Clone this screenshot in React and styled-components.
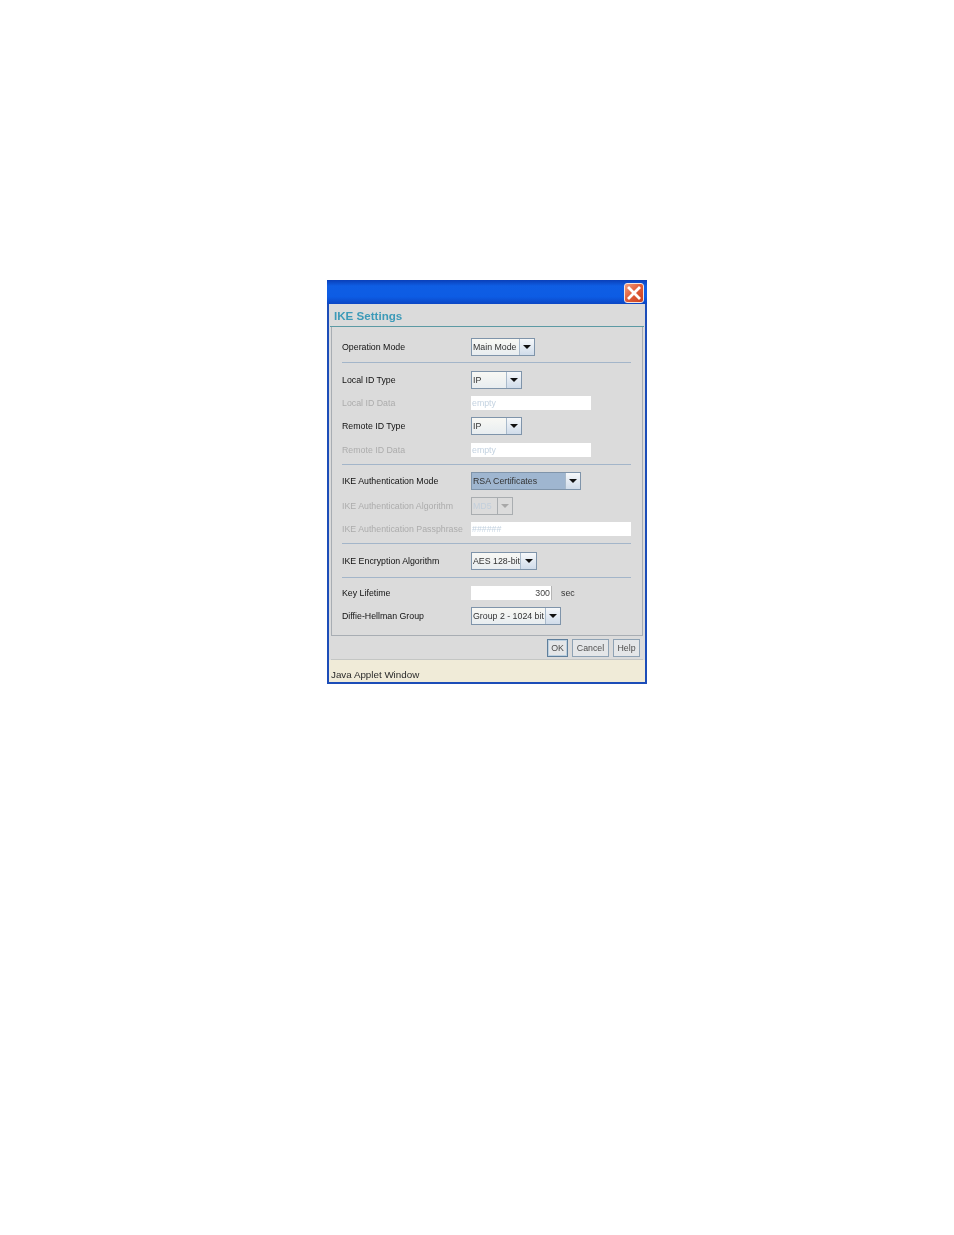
import React from "react";
import styled, { createGlobalStyle } from "styled-components";

const Global = createGlobalStyle`
  html, body { margin: 0; padding: 0; background: #fff; }
  body { font-family: "Liberation Sans", Arial, sans-serif; }
`;

const Page = styled.div`
  width: 954px;
  height: 1235px;
  padding: 280px 0 0 327px;
  box-sizing: border-box;
  overflow: hidden;
`;

const Win = styled.div`
  width: 320px;
  height: 404px;
  box-sizing: border-box;
  display: flex;
  flex-direction: column;
  background: #dbdbdb;
  border: solid #1c4db8;
  border-width: 0 2px 2px 2px;
  filter: blur(0.5px);
`;

const TitleBar = styled.div`
  flex: 0 0 24px;
  margin: 0 -2px;
  display: flex;
  justify-content: flex-end;
  align-items: flex-start;
  padding: 3px 3px 0 0;
  box-sizing: border-box;
  background: linear-gradient(180deg, #0a3fb8 0%, #0f5ee4 25%, #0d5ce4 70%, #0b46c4 100%);
`;

const CloseBtn = styled.div`
  width: 20px;
  height: 20px;
  display: flex;
  align-items: center;
  justify-content: center;
  background: linear-gradient(135deg, #f0a080 0%, #e2603c 45%, #c8401f 100%);
  border: 1px solid #f4e6e0;
  border-radius: 3px;
  box-sizing: border-box;
`;

const Heading = styled.div`
  flex: 0 0 23px;
  margin: 0 1px;
  padding: 4px 0 0 4px;
  box-sizing: border-box;
  border-bottom: 1px solid #5c9aa4;
  color: #3d9ab8;
  font-size: 11.6px;
  font-weight: bold;
  line-height: 15px;
`;

const Panel = styled.div`
  margin: 0 2px;
  flex: 0 0 309px;
  box-sizing: border-box;
  border: 1px solid #a8adb3;
  border-top: 0;
  padding: 0 11px 0 10px;
`;

const Section = styled.div`
  padding: ${(p) => p.$top}px 0 ${(p) => p.$bottom}px;
  border-bottom: ${(p) => (p.$line ? "1px solid #a3b5c9" : "0")};
`;

const Row = styled.div`
  display: flex;
  align-items: center;
  height: ${(p) => p.$h || 23}px;
`;

const Label = styled.div`
  flex: 0 0 129px;
  font-size: 8.8px;
  white-space: nowrap;
  color: ${(p) => (p.$off ? "#acacac" : "#111")};
`;

const Combo = styled.div`
  display: flex;
  height: 18px;
  width: ${(p) => p.$w}px;
  box-sizing: border-box;
  border: 1px solid ${(p) => (p.$off ? "#a9adb0" : "#7f94aa")};
  background: ${(p) =>
    p.$selected ? "#9fb6d0" : p.$off ? "#dbdbdb" : "linear-gradient(180deg,#f8f8f4,#e8edf0)"};
`;

const ComboText = styled.div`
  flex: 1;
  font-size: 8.8px;
  line-height: 16px;
  padding-left: 1px;
  white-space: nowrap;
  overflow: hidden;
  color: ${(p) => (p.$off ? "#c2cfdc" : "#333")};
`;

const Arrow = styled.div`
  flex: 0 0 ${(p) => p.$w || 13}px;
  display: flex;
  align-items: center;
  justify-content: center;
  border-left: 1px solid ${(p) => (p.$off ? "#a9adb0" : "#a9bacb")};
  background: ${(p) => (p.$off ? "#dbdbdb" : "linear-gradient(180deg,#f6f8fa,#d0dcea)")};

  &::after {
    content: "";
    border: solid transparent;
    border-width: 4px 4px 0;
    border-top-color: ${(p) => (p.$off ? "#a8a8a8" : "#111")};
  }
`;

const Field = styled.div`
  height: 14px;
  width: ${(p) => p.$w}px;
  box-sizing: border-box;
  background: #fff;
  font-size: 8.8px;
  line-height: 14px;
  padding: 0 ${(p) => (p.$right ? 1 : 0)}px 0 1px;
  text-align: ${(p) => (p.$right ? "right" : "left")};
  color: ${(p) => (p.$right ? "#444" : "#c3d2e0")};
  border-right: ${(p) => (p.$right ? "1px solid #b5b5b5" : "0")};
`;

const Unit = styled.span`
  margin-left: 9px;
  font-size: 8.8px;
  color: #333;
`;

const Buttons = styled.div`
  flex: 0 0 24px;
  box-sizing: border-box;
  margin: 0 2px;
  display: flex;
  justify-content: flex-end;
  align-items: center;
  gap: 4px;
  padding: 0 3px 0 0;
  border-bottom: 1px solid #c4c6c4;
`;

const Btn = styled.div`
  height: 18px;
  width: ${(p) => p.$w}px;
  box-sizing: border-box;
  text-align: center;
  font-size: 8.8px;
  line-height: 16px;
  color: #4d4d4d;
  background: #e4e6e8;
  border: 1px solid ${(p) => (p.$focus ? "#5f7f9c" : "#8ea2b4")};
  box-shadow: ${(p) => (p.$focus ? "inset 0 0 0 1px #bcd0e0" : "none")};
`;

const Status = styled.div`
  flex: 1;
  background: #f0ebd8;
  font-size: 9.8px;
  line-height: 14px;
  padding: 8px 0 0 2px;
  color: #2a2a2a;
`;

function Select({ w, arrow, off, selected, children }) {
  return (
    <Combo $w={w} $off={off} $selected={selected}>
      <ComboText $off={off}>{children}</ComboText>
      <Arrow $w={arrow} $off={off} />
    </Combo>
  );
}

export default function App() {
  return (
    <Page>
      <Global />
      <Win>
        <TitleBar>
          <CloseBtn>
            <svg width="14" height="14" viewBox="0 0 14 14">
              <path d="M2 2 L12 12 M12 2 L2 12" stroke="#fff" strokeWidth="2.8" strokeLinecap="square" />
            </svg>
          </CloseBtn>
        </TitleBar>
        <Heading>IKE Settings</Heading>
        <Panel>
          <Section $top={11} $bottom={7} $line>
            <Row $h={17}>
              <Label>Operation Mode</Label>
              <Select w={64} arrow={14}>Main Mode</Select>
            </Row>
          </Section>
          <Section $top={5} $bottom={2} $line>
            <Row $h={23.4}>
              <Label>Local ID Type</Label>
              <Select w={51} arrow={14}>IP</Select>
            </Row>
            <Row $h={23.4}>
              <Label $off>Local ID Data</Label>
              <Field $w={120}>empty</Field>
            </Row>
            <Row $h={23.4}>
              <Label>Remote ID Type</Label>
              <Select w={51} arrow={14}>IP</Select>
            </Row>
            <Row $h={23.4}>
              <Label $off>Remote ID Data</Label>
              <Field $w={120}>empty</Field>
            </Row>
          </Section>
          <Section $top={4} $bottom={3} $line>
            <Row $h={24}>
              <Label>IKE Authentication Mode</Label>
              <Select w={110} arrow={14} selected>RSA Certificates</Select>
            </Row>
            <Row $h={26}>
              <Label $off>IKE Authentication Algorithm</Label>
              <Select w={42} arrow={14} off>MD5</Select>
            </Row>
            <Row $h={21}>
              <Label $off>IKE Authentication Passphrase</Label>
              <Field $w={160}>######</Field>
            </Row>
          </Section>
          <Section $top={8} $bottom={7} $line>
            <Row $h={18}>
              <Label>IKE Encryption Algorithm</Label>
              <Select w={66} arrow={15}>AES 128-bit</Select>
            </Row>
          </Section>
          <Section $top={4} $bottom={0}>
            <Row $h={23}>
              <Label>Key Lifetime</Label>
              <Field $w={81} $right>300</Field>
              <Unit>sec</Unit>
            </Row>
            <Row $h={23}>
              <Label>Diffie-Hellman Group</Label>
              <Select w={90} arrow={14}>Group 2 - 1024 bit</Select>
            </Row>
          </Section>
        </Panel>
        <Buttons>
          <Btn $w={21} $focus>OK</Btn>
          <Btn $w={37}>Cancel</Btn>
          <Btn $w={27}>Help</Btn>
        </Buttons>
        <Status>Java Applet Window</Status>
      </Win>
    </Page>
  );
}
